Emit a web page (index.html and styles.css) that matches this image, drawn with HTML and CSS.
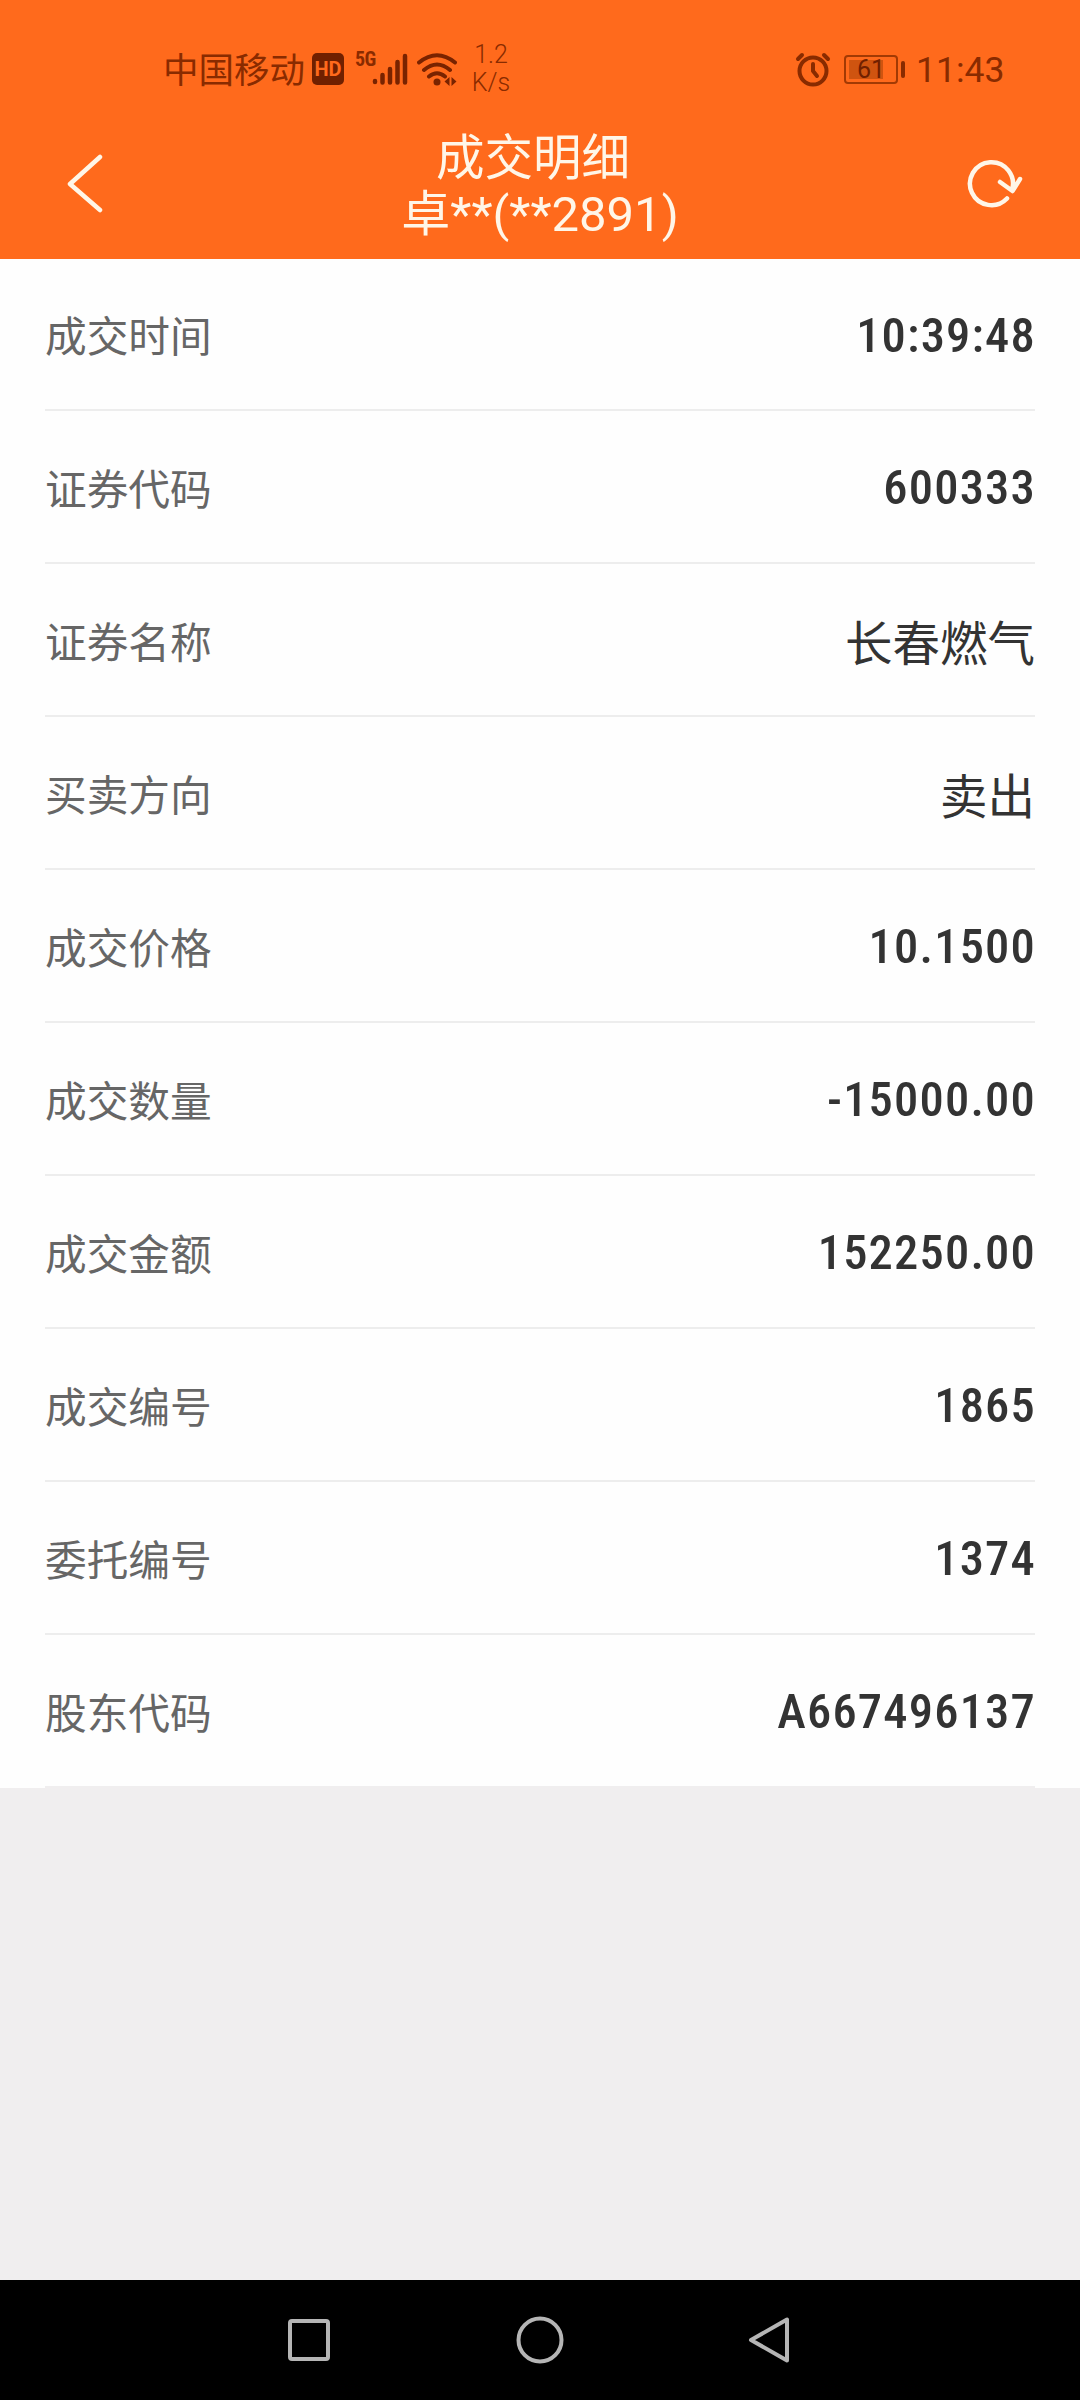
FILE: index.html
```html
<!DOCTYPE html>
<html lang="zh-CN">
<head>
  <meta charset="UTF-8">
  <meta name="viewport" content="width=device-width, initial-scale=1.0">
  <title>成交明细</title>
  <link rel="stylesheet" href="styles.css">
</head>
<body>
  <header class="header">
    <div class="status-bar">
      <span class="carrier">中国移动</span>
      <span class="hd">HD</span>
      <span class="network">5G</span>
      <svg class="signal" width="36" height="34" viewBox="0 0 36 34">
        <path d="M3 29v1M10.500 23v7.500M18 17v13.500M25.500 10v20.500M33 4v26.500"/>
      </svg>
      <svg class="wifi" width="40" height="34" viewBox="0 0 40 34">
        <path d="M2 10.500Q20-4 38 10.500M7 18Q20 7 33 18M12 24.500Q20 18 28 24.500"/>
        <circle cx="20" cy="30" r="3.500"/>
        <path class="arrows" d="M32.500 25v9l-5-4.500zM34.500 25v9l5-4.500z"/>
      </svg>
      <span class="speed">1.2<br>K/s</span>
      <svg class="alarm" width="36" height="36" viewBox="0 0 36 36">
        <circle cx="18" cy="20" r="13.500"/>
        <path d="M18 13v7l4 5M3 8l4-4M29 4l4 4"/>
      </svg>
      <span class="battery"><span>61</span></span>
      <span class="clock">11:43</span>
    </div>
    <div class="title-bar">
      <svg class="back" width="40" height="60" viewBox="0 0 40 60">
        <path d="M35 3L5 30L35 56"/>
      </svg>
      <div class="title">
        <h1>成交明细</h1>
        <p>卓**(**2891)</p>
      </div>
      <svg class="refresh" width="56" height="50" viewBox="0 0 56 50">
        <path d="M40 39.500A21.500 21.500 0 1 1 45 31M33 23L45.500 32L53 20"/>
      </svg>
    </div>
  </header>

  <main class="list">
    <div class="row"><span class="label">成交时间</span><span class="value">10:39:48</span></div>
    <div class="row"><span class="label">证券代码</span><span class="value">600333</span></div>
    <div class="row"><span class="label">证券名称</span><span class="value text">长春燃气</span></div>
    <div class="row"><span class="label">买卖方向</span><span class="value text">卖出</span></div>
    <div class="row"><span class="label">成交价格</span><span class="value">10.1500</span></div>
    <div class="row"><span class="label">成交数量</span><span class="value">-15000.00</span></div>
    <div class="row"><span class="label">成交金额</span><span class="value">152250.00</span></div>
    <div class="row"><span class="label">成交编号</span><span class="value">1865</span></div>
    <div class="row"><span class="label">委托编号</span><span class="value">1374</span></div>
    <div class="row"><span class="label">股东代码</span><span class="value">A667496137</span></div>
  </main>

  <nav class="nav-bar">
    <svg width="50" height="50" viewBox="0 0 50 50"><rect x="6" y="6" width="38" height="38" rx="2"/></svg>
    <svg width="50" height="50" viewBox="0 0 50 50"><circle cx="25" cy="25" r="21.500"/></svg>
    <svg width="50" height="50" viewBox="0 0 50 50"><path d="M41 4.500v41L5 25z"/></svg>
  </nav>
</body>
</html>
```
FILE: styles.css
```css
* {
  margin: 0;
  padding: 0;
  box-sizing: border-box;
}

body {
  display: flex;
  flex-direction: column;
  height: 2400px;
  font-family: Roboto, "Noto Sans CJK SC", sans-serif;
  background: #f0eeef;
  color: #333;
}

svg {
  flex: none;
  fill: none;
  stroke-linecap: round;
  stroke-linejoin: round;
}

/* Header */
.header {
  height: 259px;
  background: #ff6a1c;
}

/* Status bar */
.status-bar {
  display: flex;
  align-items: center;
  height: 122px;
  padding: 16px 75px 0 163px;
  color: #892b00;
}

.carrier {
  width: 149px;
  padding-top: 3px;
  font-size: 35.500px;
  line-height: 40px;
  white-space: nowrap;
}

.hd {
  width: 32px;
  height: 32px;
  border-radius: 5px;
  background: #702000;
  color: #ff6a1c;
  font-size: 20px;
  font-weight: 700;
  line-height: 33px;
  text-align: center;
}

.network {
  width: 19px;
  margin: 0 -2px 20px 11px;
  font-size: 20px;
  font-weight: 700;
  font-stretch: 75%;
  line-height: 20px;
  letter-spacing: -0.500px;
}

.signal {
  stroke: #792300;
  stroke-width: 4.500;
}

.wifi {
  margin-left: 9px;
  stroke: #792300;
  stroke-width: 4;
}

.wifi circle,
.wifi .arrows {
  fill: #792300;
  stroke: none;
}

.speed {
  width: 50px;
  margin-left: 9px;
  font-size: 25px;
  font-weight: 300;
  line-height: 28px;
  text-align: center;
}

.alarm {
  margin-left: auto;
  stroke: #892b00;
  stroke-width: 4;
}

.battery {
  position: relative;
  width: 54px;
  height: 29px;
  margin: 0 18px 0 13px;
  padding: 3px;
  border: 2px solid #a23a04;
  border-radius: 4px;
}

.battery span {
  display: block;
  width: 34px;
  height: 19px;
  padding-left: 8px;
  background: #cf5410;
  color: #702000;
  font-size: 25px;
  line-height: 20px;
}

.battery::after {
  content: "";
  position: absolute;
  top: 4px;
  right: -9px;
  width: 4px;
  height: 17px;
  border-radius: 2px;
  background: #892b00;
}

.clock {
  width: 89px;
  padding-top: 2px;
  font-size: 35.500px;
  line-height: 40px;
  white-space: nowrap;
}

/* Title bar */
.title-bar {
  display: flex;
  justify-content: space-between;
  align-items: center;
  height: 124px;
  padding: 0 57px 0 65px;
  color: #fff6e8;
}

.title {
  padding: 5px 0 0 8px;
  font-size: 49px;
  line-height: 56px;
  text-align: center;
}

.title h1 {
  padding-right: 14px;
  font-size: 48.500px;
  font-weight: 400;
}

.back,
.refresh {
  stroke: #fff6e8;
  stroke-width: 4.500;
}

/* Detail rows */
.list {
  padding: 0 45px;
  background: #fefefe;
}

.row {
  display: flex;
  justify-content: space-between;
  align-items: center;
  height: 153px;
  border-bottom: 2px solid #ededed;
}

.row:first-child {
  height: 152px;
}

.row:last-child {
  border-bottom-color: #f0eeef;
}

.label {
  color: #666;
  font-size: 41.700px;
}

.value {
  padding-top: 2px;
  margin-right: -1px;
  font-size: 48.500px;
  font-weight: 500;
  font-stretch: 75%;
  letter-spacing: 1.200px;
}

.value.text {
  margin-right: 0;
  font-size: 47.500px;
  font-weight: 400;
  letter-spacing: 0;
}

/* System navigation */
.nav-bar {
  display: flex;
  justify-content: center;
  align-items: center;
  gap: 181px;
  height: 120px;
  margin-top: auto;
  background: #000;
}

.nav-bar svg {
  stroke: #b5b5b5;
  stroke-width: 4;
}
```
